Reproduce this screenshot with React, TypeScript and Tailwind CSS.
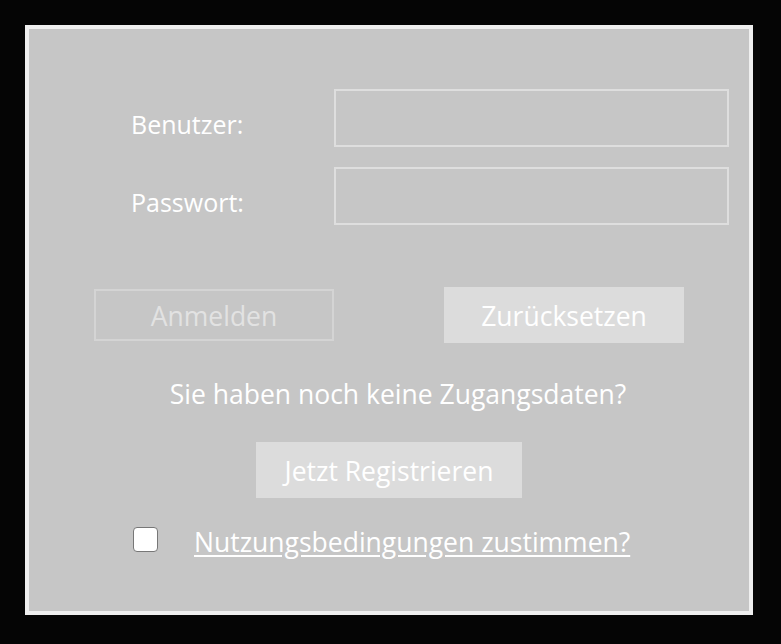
import { useState } from 'react'

const font = { fontFamily: '"Open Sans", "Noto Sans", sans-serif' }

function Field({ label, type = 'text' }: { label: string; type?: string }) {
    return (
        <div className="flex items-center">
            <label className="w-[305px] pl-[102px] pt-[14px] text-[25px] text-white">{label}</label>
            <input
                type={type}
                className="h-[58px] w-[395px] border-2 border-[#dedede] bg-transparent px-2 text-[20px] text-white outline-none"
            />
        </div>
    )
}

export default function App() {
    const [agreed, setAgreed] = useState(false)

    return (
        <div className="min-h-[644px] w-full bg-[#050505] pl-[25px] pt-[25px]" style={font}>
            <div className="flex h-[590px] w-[728px] flex-col border-4 border-[#efefef] bg-[#c6c6c6]">
                <div className="mt-[60px] flex flex-col gap-[20px]">
                    <Field label="Benutzer:" />
                    <Field label="Passwort:" type="password" />
                </div>

                <div className="mt-[62px] flex h-[56px] items-center">
                    <button
                        disabled
                        className="ml-[65px] h-[52px] w-[240px] border-2 border-[#d4d4d4] pt-[3px] text-[26.5px] text-[#e2e2e2]"
                    >
                        Anmelden
                    </button>
                    <button className="ml-[110px] h-[56px] w-[240px] bg-[#dcdcdc] pt-[3px] text-[26.5px] text-white">
                        Zurücksetzen
                    </button>
                </div>

                <p className="mt-[35px] h-[32px] pl-[18px] text-center text-[26.5px] leading-[32px] text-white">
                    Sie haben noch keine Zugangsdaten?
                </p>

                <button className="mx-auto mt-[32px] h-[56px] w-[266px] bg-[#dcdcdc] pt-[3px] text-[26.5px] text-white">
                    Jetzt Registrieren
                </button>

                <div className="mt-[29px] flex items-start">
                    <input
                        type="checkbox"
                        checked={agreed}
                        onChange={(e) => setAgreed(e.target.checked)}
                        className="ml-[104px] h-[25px] w-[25px] appearance-none rounded-[4px] border border-[#777777] bg-white"
                    />
                    <a
                        href="#"
                        className="-mt-px ml-[36px] text-[26.5px] leading-[32px] text-white underline underline-offset-[3px]"
                    >
                        Nutzungsbedingungen zustimmen?
                    </a>
                </div>
            </div>
        </div>
    )
}
